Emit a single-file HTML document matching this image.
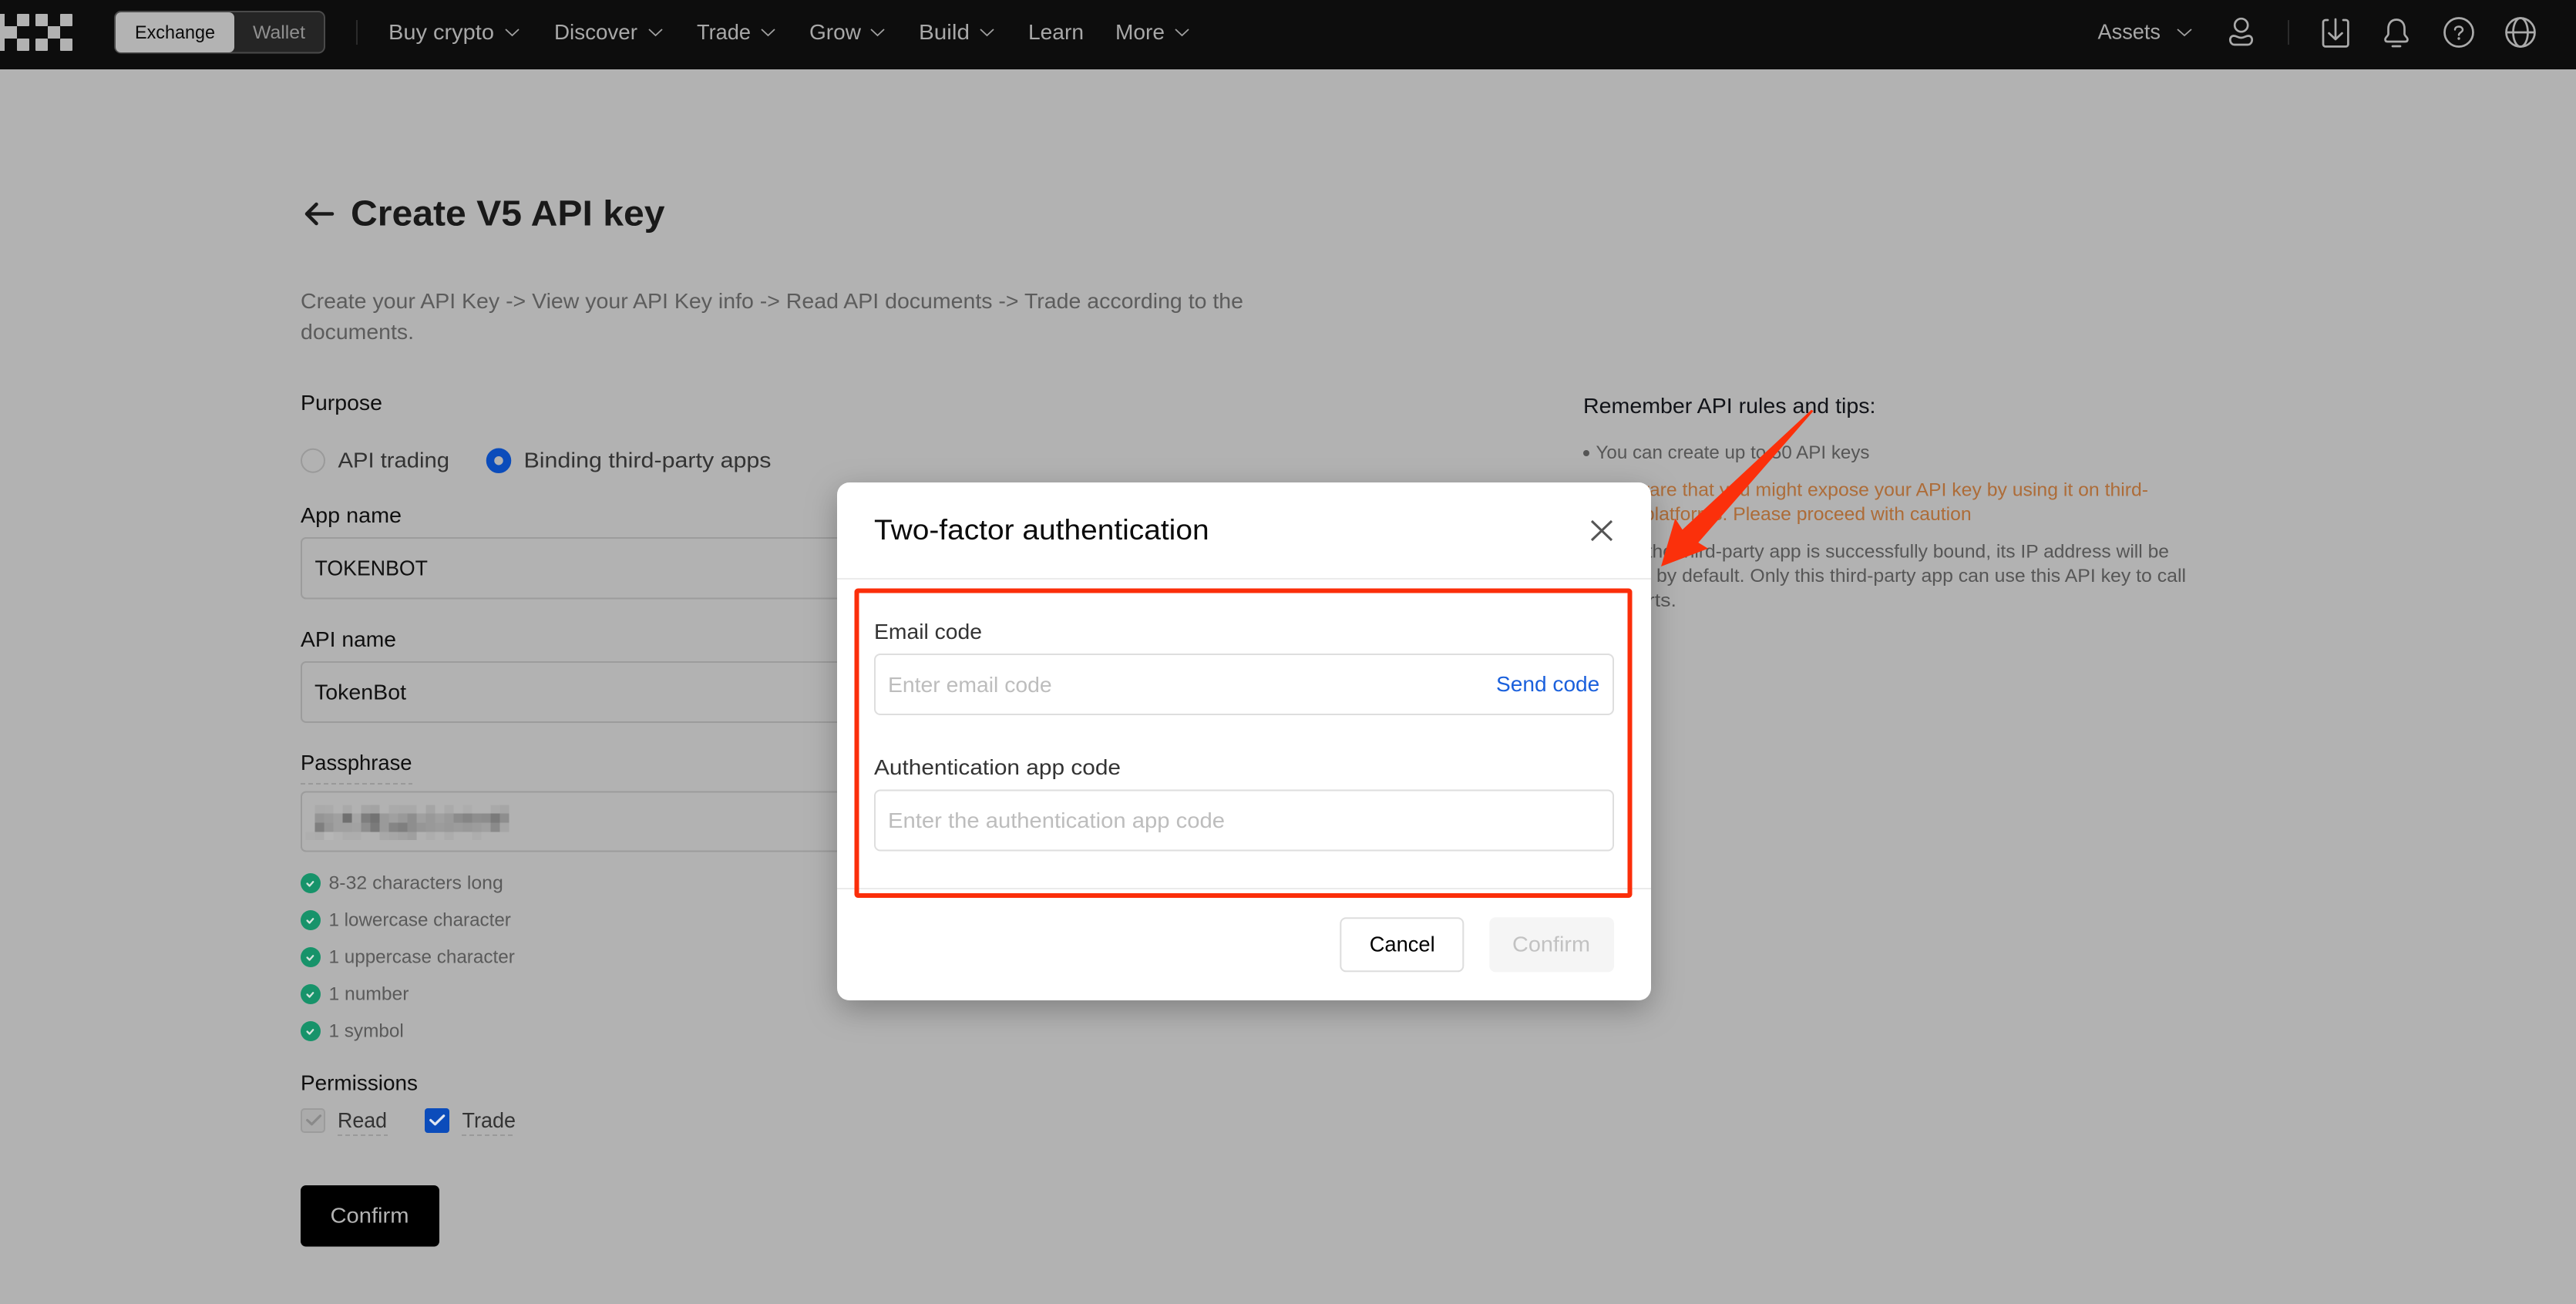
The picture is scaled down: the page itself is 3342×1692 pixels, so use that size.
<!DOCTYPE html>
<html lang="en">
<head>
<meta charset="utf-8">
<title>Create V5 API key</title>
<style>
html,body{margin:0;padding:0;width:3342px;height:1692px;overflow:hidden;background:#b2b2b2}
svg{display:block}
text{font-family:"Liberation Sans",sans-serif;white-space:pre}
</style>
</head>
<body>
<svg xmlns="http://www.w3.org/2000/svg" width="3342" height="1692" viewBox="0 0 3342 1692">
<defs>
<filter id="sh" x="-10%" y="-15%" width="120%" height="135%"><feDropShadow dx="0" dy="12" stdDeviation="20" flood-color="#000" flood-opacity="0.28"/></filter>
</defs>
<rect width="3342" height="1692" fill="#b2b2b2"/>

<!-- NAV -->
<rect width="3342" height="90" fill="#0d0d0d"/>
<g fill="#b2b2b2">
<rect x="0" y="18" width="6" height="16"/><rect x="22" y="18" width="16" height="16" rx="1"/><rect x="46" y="18" width="16" height="16" rx="1"/><rect x="78" y="18" width="16" height="16" rx="1"/>
<rect x="0" y="34" width="22" height="16"/><rect x="62" y="34" width="16" height="16"/>
<rect x="0" y="50" width="6" height="16"/><rect x="22" y="50" width="16" height="16" rx="1"/><rect x="46" y="50" width="16" height="16" rx="1"/><rect x="78" y="50" width="16" height="16" rx="1"/>
</g>
<rect x="149" y="15" width="272" height="53.5" rx="8" fill="#252525" stroke="#4a4a4a" stroke-width="2"/>
<rect x="150" y="16" width="154" height="52" rx="7" fill="#b3b3b3"/>
<text x="175" y="50" font-size="24" fill="#0b0b0b" textLength="104" lengthAdjust="spacingAndGlyphs">Exchange</text>
<text x="328" y="50" font-size="24" fill="#8f8f8f" textLength="68" lengthAdjust="spacingAndGlyphs">Wallet</text>
<rect x="462" y="26" width="2" height="32" fill="#2b2b2b"/>

<g font-size="28" fill="#a8a8a8">
<text x="504" y="51" textLength="137" lengthAdjust="spacingAndGlyphs">Buy crypto</text>
<text x="719" y="51" textLength="108" lengthAdjust="spacingAndGlyphs">Discover</text>
<text x="904" y="51" textLength="70" lengthAdjust="spacingAndGlyphs">Trade</text>
<text x="1050" y="51" textLength="67" lengthAdjust="spacingAndGlyphs">Grow</text>
<text x="1192" y="51" textLength="66" lengthAdjust="spacingAndGlyphs">Build</text>
<text x="1334" y="51" textLength="72" lengthAdjust="spacingAndGlyphs">Learn</text>
<text x="1447" y="51" textLength="64" lengthAdjust="spacingAndGlyphs">More</text>
<text x="2721.5" y="50.5" textLength="81.5" lengthAdjust="spacingAndGlyphs">Assets</text>
</g>
<g fill="none" stroke="#a0a0a0" stroke-width="1.8">
<path d="M656 38l8.5 8 8.5-8"/><path d="M842 38l8.5 8 8.5-8"/><path d="M988 38l8.5 8 8.5-8"/><path d="M1130 38l8.5 8 8.5-8"/><path d="M1272 38l8.5 8 8.5-8"/><path d="M1525 38l8.5 8 8.5-8"/><path d="M2825 38l9 8 9-8"/>
</g>
<rect x="2968" y="26" width="2" height="32" fill="#2b2b2b"/>
<g fill="none" stroke="#aaaaaa" stroke-width="2.7" stroke-linecap="round" stroke-linejoin="round">
<circle cx="2907.7" cy="32.7" r="8.5"/>
<path d="M2898 46.5C2902 46.5 2903 49 2907.5 49C2912 49 2913 46.5 2917 46.5C2920 46.5 2921.7 49 2921.7 51.5C2921.7 55 2919.5 58 2916 58H2899C2895.5 58 2893.3 55 2893.3 51.5C2893.3 49 2895 46.5 2898 46.5Z"/>
<path d="M3020 26H3017a3 3 0 0 0-3 3V57.4a3 3 0 0 0 3 3H3043.4a3 3 0 0 0 3-3V29a3 3 0 0 0-3-3H3040"/>
<path d="M3030 25V50.5M3021.5 43L3030 51L3038.5 43"/>
<path d="M3109 25.5C3102 25.5 3098.5 31 3098.5 37V44C3098.5 46.5 3094.5 48.5 3094.5 51C3094.5 53 3095.5 54 3097.5 54H3120.5C3122.5 54 3123.5 53 3123.5 51C3123.5 48.5 3119.5 46.5 3119.5 44V37C3119.5 31 3116 25.5 3109 25.5Z"/>
<path d="M3104 60H3114"/>
<circle cx="3190" cy="42" r="18.5"/>
<path d="M3185 38.5C3185 36 3187 34.5 3190 34.5C3193 34.5 3195 36.5 3195 38.8C3195 41.8 3190 42 3190 45.5" stroke-width="2.4"/>
<circle cx="3270" cy="42" r="18.5"/>
<ellipse cx="3270" cy="42" rx="9.5" ry="18.5"/>
<path d="M3252 42H3288"/>
</g>
<circle cx="3190" cy="50" r="1.7" fill="#aaaaaa"/>

<!-- LEFT FORM -->
<path d="M431 277.5H398.500M410.500 265L398 277.500L410.500 290" fill="none" stroke="#1a1a1a" stroke-width="4.5" stroke-linecap="round" stroke-linejoin="round"/>
<text x="455" y="292.5" font-size="46" font-weight="700" fill="#191919" textLength="407.5" lengthAdjust="spacingAndGlyphs">Create V5 API key</text>
<text x="390" y="400" font-size="28" fill="#5c5c5c" textLength="1223" lengthAdjust="spacingAndGlyphs">Create your API Key -&gt; View your API Key info -&gt; Read API documents -&gt; Trade according to the</text>
<text x="390" y="440" font-size="28" fill="#5c5c5c" textLength="147" lengthAdjust="spacingAndGlyphs">documents.</text>

<text x="390" y="532" font-size="28" fill="#0f0f0f" textLength="106" lengthAdjust="spacingAndGlyphs">Purpose</text>
<circle cx="406" cy="597.7" r="15" fill="none" stroke="#9a9a9a" stroke-width="2"/>
<text x="438.5" y="606.5" font-size="28" fill="#333333" textLength="144.5" lengthAdjust="spacingAndGlyphs">API trading</text>
<circle cx="647" cy="597.7" r="11" fill="none" stroke="#0b4cbb" stroke-width="10.5"/>
<text x="679.5" y="606.5" font-size="28" fill="#333333" textLength="321" lengthAdjust="spacingAndGlyphs">Binding third-party apps</text>

<text x="390" y="678" font-size="28" fill="#0f0f0f" textLength="131" lengthAdjust="spacingAndGlyphs">App name</text>
<rect x="391" y="698" width="900" height="78.5" rx="6" fill="none" stroke="#9c9c9c" stroke-width="2"/>
<text x="408.500" y="746.500" font-size="28" fill="#111111" textLength="146.5" lengthAdjust="spacingAndGlyphs">TOKENBOT</text>

<text x="390" y="839" font-size="28" fill="#0f0f0f" textLength="124" lengthAdjust="spacingAndGlyphs">API name</text>
<rect x="391" y="859" width="900" height="78" rx="6" fill="none" stroke="#9c9c9c" stroke-width="2"/>
<text x="408" y="907.5" font-size="28" fill="#111111" textLength="119" lengthAdjust="spacingAndGlyphs">TokenBot</text>

<text x="390" y="999" font-size="28" fill="#0f0f0f" textLength="144.5" lengthAdjust="spacingAndGlyphs">Passphrase</text>
<path d="M390 1017H535" stroke="#999999" stroke-width="2" stroke-dasharray="6 4"/>
<rect x="391" y="1027.5" width="900" height="77" rx="6" fill="none" stroke="#9c9c9c" stroke-width="2"/>

<!-- pixelated passphrase -->
<g shape-rendering="crispEdges">
<g transform="translate(396.5 1044.5)">
<rect x="12" width="12" height="11" fill="#aaa"/><rect x="24" width="12" height="11" fill="#ababab"/><rect x="48" width="12" height="11" fill="#a9a9a9"/><rect x="72" width="12" height="11" fill="#a5a5a5"/><rect x="84" width="12" height="11" fill="#a3a3a3"/><rect x="108" width="12" height="11" fill="#aaa"/><rect x="120" width="12" height="11" fill="#a9a9a9"/><rect x="132" width="12" height="11" fill="#a9a9a9"/><rect x="156" width="12" height="11" fill="#a5a5a5"/><rect x="180" width="12" height="11" fill="#aaa"/><rect x="204" width="12" height="11" fill="#adadad"/><rect x="240" width="12" height="11" fill="#a9a9a9"/><rect x="252" width="12" height="11" fill="#a6a6a6"/>
</g>
<g transform="translate(408.5 1055.5)">
<rect x="0" width="12" height="12" fill="#959595"/><rect x="12" width="12" height="12" fill="#9a9a9a"/><rect x="24" width="12" height="12" fill="#a0a0a0"/><rect x="36" width="12" height="12" fill="#707070"/><rect x="48" width="12" height="12" fill="#a5a5a5"/><rect x="60" width="12" height="12" fill="#7e7e7e"/><rect x="72" width="12" height="12" fill="#737373"/><rect x="84" width="12" height="12" fill="#9a9a9a"/><rect x="96" width="12" height="12" fill="#a0a0a0"/><rect x="108" width="12" height="12" fill="#999"/><rect x="120" width="12" height="12" fill="#8e8e8e"/><rect x="132" width="12" height="12" fill="#a0a0a0"/><rect x="144" width="12" height="12" fill="#999"/><rect x="156" width="12" height="12" fill="#a0a0a0"/><rect x="168" width="12" height="12" fill="#9a9a9a"/><rect x="180" width="12" height="12" fill="#8c8c8c"/><rect x="192" width="12" height="12" fill="#858585"/><rect x="204" width="12" height="12" fill="#8e8e8e"/><rect x="216" width="12" height="12" fill="#8c8c8c"/><rect x="228" width="12" height="12" fill="#7a7a7a"/><rect x="240" width="12" height="12" fill="#8e8e8e"/>
</g>
<g transform="translate(408.5 1067.5)">
<rect x="0" width="12" height="12" fill="#7f7f7f"/><rect x="12" width="12" height="12" fill="#969696"/><rect x="24" width="12" height="12" fill="#a0a0a0"/><rect x="36" width="12" height="12" fill="#a0a0a0"/><rect x="48" width="12" height="12" fill="#a2a2a2"/><rect x="60" width="12" height="12" fill="#8e8e8e"/><rect x="72" width="12" height="12" fill="#7a7a7a"/><rect x="84" width="12" height="12" fill="#9a9a9a"/><rect x="96" width="12" height="12" fill="#858585"/><rect x="108" width="12" height="12" fill="#7f7f7f"/><rect x="120" width="12" height="12" fill="#8e8e8e"/><rect x="132" width="12" height="12" fill="#969696"/><rect x="144" width="12" height="12" fill="#999"/><rect x="156" width="12" height="12" fill="#9c9c9c"/><rect x="168" width="12" height="12" fill="#999"/><rect x="180" width="12" height="12" fill="#9c9c9c"/><rect x="192" width="12" height="12" fill="#999"/><rect x="204" width="12" height="12" fill="#9c9c9c"/><rect x="216" width="12" height="12" fill="#a0a0a0"/><rect x="228" width="12" height="12" fill="#8a8a8a"/><rect x="240" width="12" height="12" fill="#a6a6a6"/>
</g>
<g transform="translate(396.5 1079.5)">
<rect x="0" width="12" height="10.5" fill="#aeaeae"/><rect x="12" width="12" height="10.5" fill="#acacac"/><rect x="24" width="12" height="10.5" fill="#b6b6b6"/><rect x="48" width="12" height="10.5" fill="#adadad"/><rect x="60" width="12" height="10.5" fill="#adadad"/><rect x="96" width="12" height="10.5" fill="#a8a8a8"/><rect x="108" width="12" height="10.5" fill="#a6a6a6"/><rect x="120" width="12" height="10.5" fill="#a3a3a3"/><rect x="132" width="12" height="10.5" fill="#9f9f9f"/><rect x="156" width="12" height="10.5" fill="#adadad"/><rect x="180" width="12" height="10.5" fill="#acacac"/><rect x="216" width="12" height="10.5" fill="#adadad"/>
</g>
</g>

<!-- password rules -->
<g fill="#17936a">
<circle cx="403" cy="1146" r="13"/><circle cx="403" cy="1194" r="13"/><circle cx="403" cy="1242" r="13"/><circle cx="403" cy="1290" r="13"/><circle cx="403" cy="1338" r="13"/>
</g>
<g fill="none" stroke="#d4e5dd" stroke-width="2.3" stroke-linecap="round" stroke-linejoin="round">
<path d="M398.6 1146.5l3 3 4.600-5.300"/><path d="M398.6 1194.5l3 3 4.600-5.300"/><path d="M398.6 1242.5l3 3 4.600-5.300"/><path d="M398.6 1290.5l3 3 4.600-5.300"/><path d="M398.6 1338.5l3 3 4.600-5.300"/>
</g>
<g font-size="24" fill="#5a5a5a">
<text x="426.5" y="1153.3" textLength="226.3" lengthAdjust="spacingAndGlyphs">8-32 characters long</text>
<text x="426.5" y="1201.5" textLength="236.3" lengthAdjust="spacingAndGlyphs">1 lowercase character</text>
<text x="426.5" y="1249.5" textLength="241.3" lengthAdjust="spacingAndGlyphs">1 uppercase character</text>
<text x="426.5" y="1297.5" textLength="103.9" lengthAdjust="spacingAndGlyphs">1 number</text>
<text x="426.5" y="1345.5" textLength="97.3" lengthAdjust="spacingAndGlyphs">1 symbol</text>
</g>

<text x="390" y="1414.5" font-size="28" fill="#0f0f0f" textLength="152" lengthAdjust="spacingAndGlyphs">Permissions</text>
<rect x="391" y="1439" width="30" height="30" rx="4" fill="#ababab" stroke="#9c9c9c" stroke-width="2"/>
<path d="M398.7 1453.5l5.800 5.300 11-11" fill="none" stroke="#8a8a8a" stroke-width="3.2" stroke-linecap="round" stroke-linejoin="round"/>
<text x="438" y="1463" font-size="28" fill="#333333" textLength="64" lengthAdjust="spacingAndGlyphs">Read</text>
<path d="M438 1473H503" stroke="#999999" stroke-width="2" stroke-dasharray="6 4"/>
<rect x="551" y="1438" width="32" height="32" rx="4" fill="#0b4cbb"/>
<path d="M558.7 1453.5l5.800 5.300 11.200-11" fill="none" stroke="#dfe6f2" stroke-width="3.2" stroke-linecap="round" stroke-linejoin="round"/>
<text x="599.5" y="1463" font-size="28" fill="#333333" textLength="69.5" lengthAdjust="spacingAndGlyphs">Trade</text>
<path d="M599 1473H669" stroke="#999999" stroke-width="2" stroke-dasharray="6 4"/>
<rect x="390" y="1538" width="180" height="79.5" rx="7" fill="#000000"/>
<text x="428.5" y="1586.6" font-size="28" fill="#b3b3b3" textLength="102" lengthAdjust="spacingAndGlyphs">Confirm</text>

<!-- RIGHT PANEL -->
<text x="2054" y="536" font-size="28" fill="#111318" textLength="379.5" lengthAdjust="spacingAndGlyphs">Remember API rules and tips:</text>
<circle cx="2058" cy="588" r="4" fill="#555555"/>
<text x="2070.5" y="595" font-size="24" fill="#565656" textLength="355" lengthAdjust="spacingAndGlyphs">You can create up to 50 API keys</text>
<g font-size="24" fill="#ad6c38">
<text x="2071" y="643.3" textLength="716" lengthAdjust="spacingAndGlyphs">Be aware that you might expose your API key by using it on third-</text>
<text x="2071" y="675" textLength="486.6" lengthAdjust="spacingAndGlyphs">party platforms. Please proceed with caution</text>
</g>
<g font-size="24" fill="#565656">
<text x="2071" y="723.5" textLength="743" lengthAdjust="spacingAndGlyphs">Once the third-party app is successfully bound, its IP address will be</text>
<text x="2149" y="755" textLength="687" lengthAdjust="spacingAndGlyphs">by default. Only this third-party app can use this API key to call</text>
<text x="2108" y="787" textLength="67" lengthAdjust="spacingAndGlyphs">ports.</text>
</g>

<!-- MODAL -->
<rect x="1086" y="626" width="1056" height="672" rx="16" fill="#ffffff" filter="url(#sh)"/>
<text x="1134" y="700" font-size="37" fill="#0b0b0b" textLength="434.6" lengthAdjust="spacingAndGlyphs">Two-factor authentication</text>
<path d="M2065 676L2091 701M2091 676L2065 701" fill="none" stroke="#555555" stroke-width="3"/>
<rect x="1086" y="750" width="1056" height="2" fill="#ebebeb"/>
<rect x="1086" y="1152" width="1056" height="2" fill="#ebebeb"/>

<text x="1134" y="828.8" font-size="28" fill="#333333" textLength="140" lengthAdjust="spacingAndGlyphs">Email code</text>
<rect x="1135" y="849" width="958" height="78" rx="7" fill="#ffffff" stroke="#dedede" stroke-width="2"/>
<text x="1152" y="898" font-size="28" fill="#bdbdbd" textLength="212.7" lengthAdjust="spacingAndGlyphs">Enter email code</text>
<text x="1941" y="897" font-size="28" fill="#1a60dc" textLength="134.3" lengthAdjust="spacingAndGlyphs">Send code</text>
<text x="1134" y="1005" font-size="28" fill="#333333" textLength="320" lengthAdjust="spacingAndGlyphs">Authentication app code</text>
<rect x="1135" y="1025.5" width="958" height="78" rx="7" fill="#ffffff" stroke="#dedede" stroke-width="2"/>
<text x="1152" y="1074" font-size="28" fill="#bdbdbd" textLength="437" lengthAdjust="spacingAndGlyphs">Enter the authentication app code</text>

<rect x="1739.3" y="1191.3" width="159" height="69" rx="7" fill="#ffffff" stroke="#dddddd" stroke-width="2"/>
<text x="1776.7" y="1234.5" font-size="28" fill="#000000" textLength="85" lengthAdjust="spacingAndGlyphs">Cancel</text>
<rect x="1932.3" y="1190.3" width="161.7" height="71" rx="8" fill="#f5f5f5"/>
<text x="1962" y="1234.5" font-size="28" fill="#c2c2c2" textLength="101" lengthAdjust="spacingAndGlyphs">Confirm</text>

<!-- ANNOTATIONS -->
<rect x="1111.5" y="766.5" width="1003" height="395.5" rx="1.5" fill="none" stroke="#fb2e0a" stroke-width="6"/>
<polygon points="2352.7,533.3 2203.3,704 2216,711.7 2155,735 2173.3,672.7 2182.7,687.3 2350,531.7" fill="#fb300b"/>
</svg>
</body>
</html>
